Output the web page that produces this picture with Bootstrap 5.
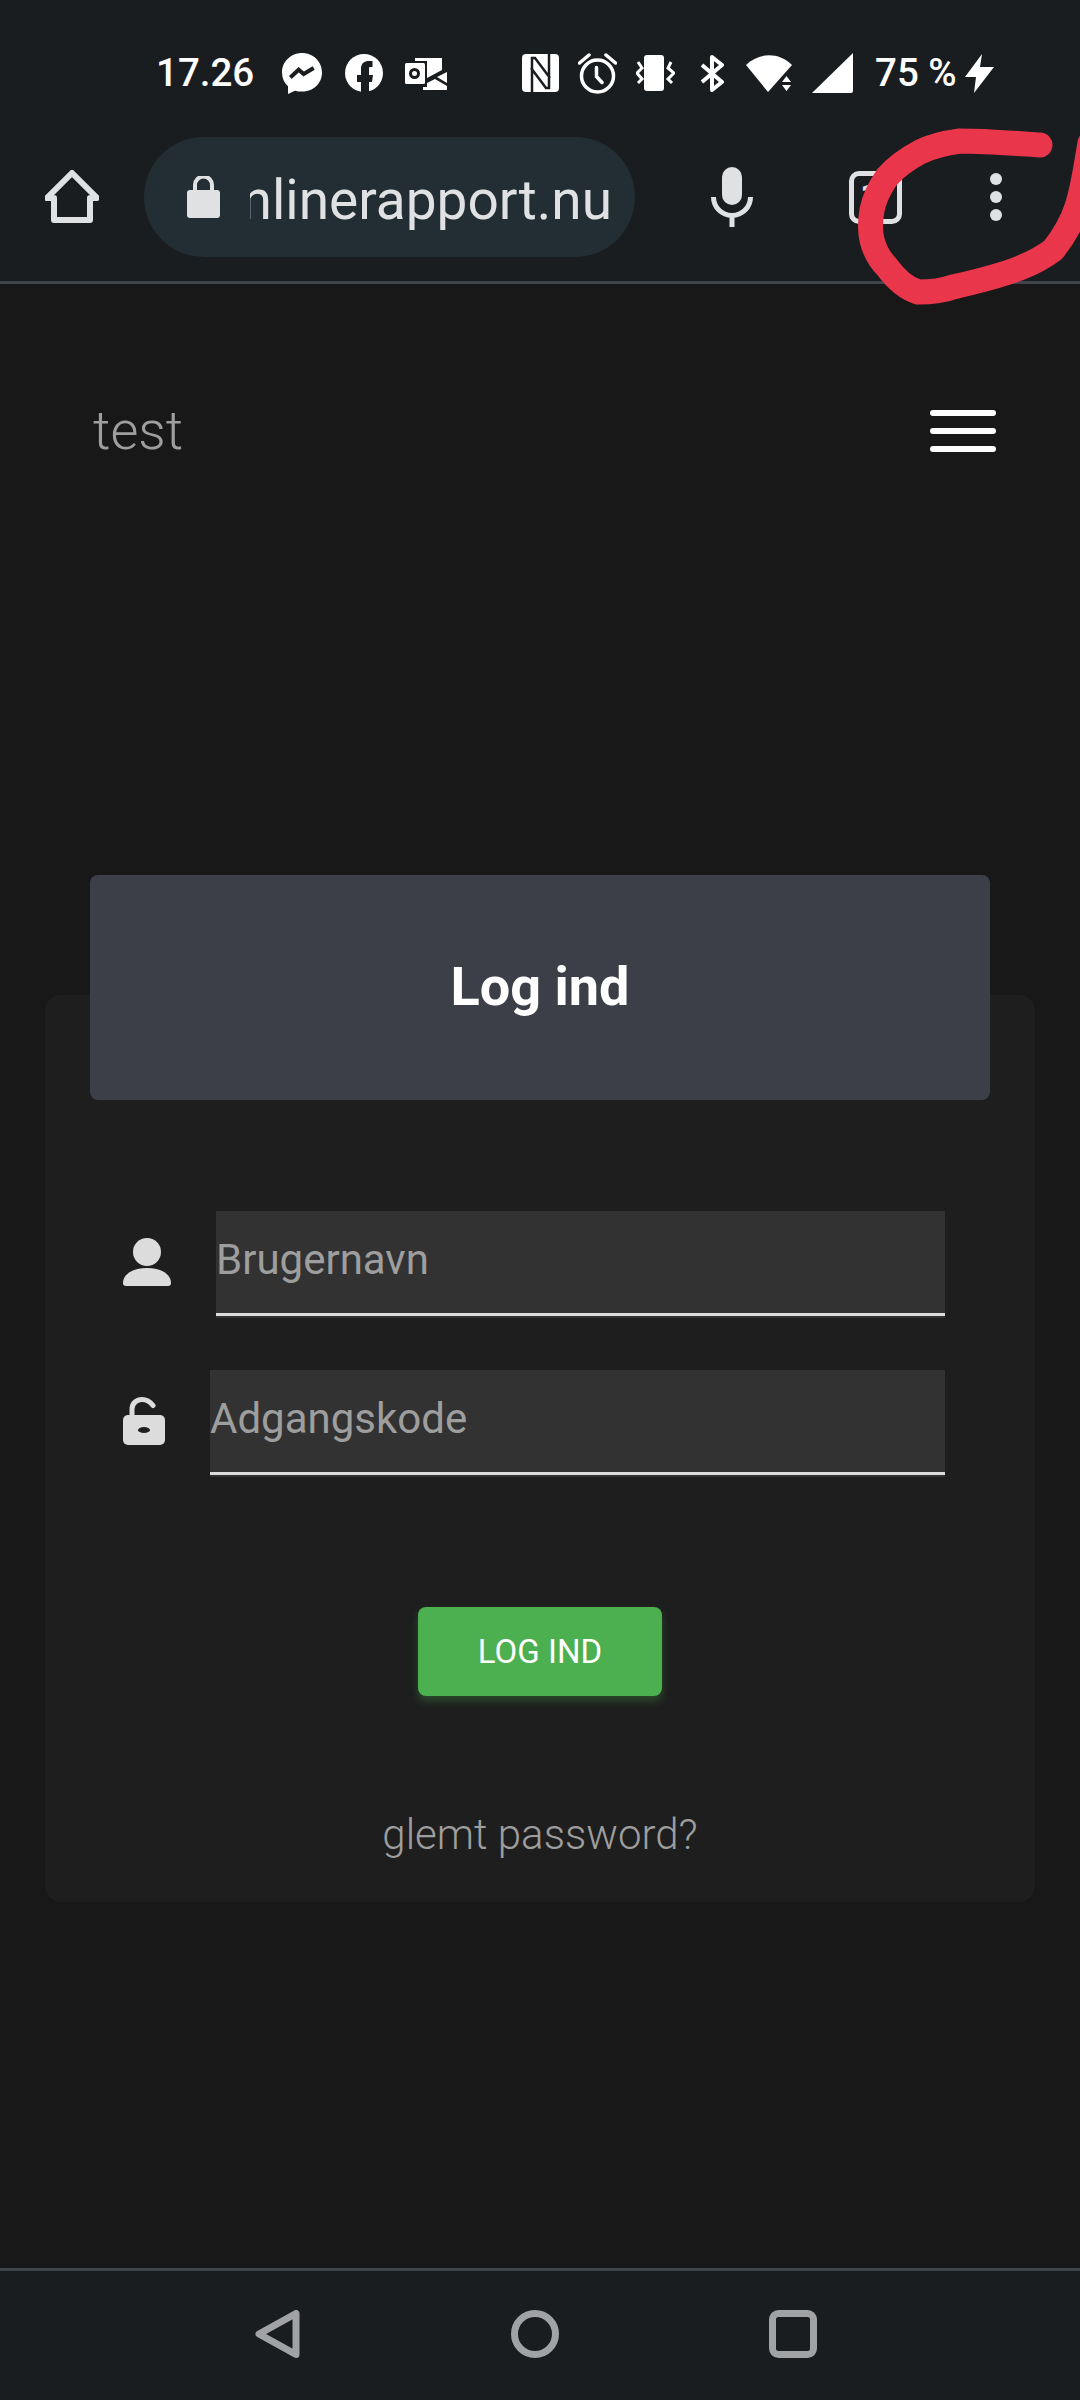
<!DOCTYPE html>
<html lang="da">
<head>
<meta charset="utf-8">
<title>Log ind</title>
<link href="https://cdn.jsdelivr.net/npm/bootstrap@5.3.0/dist/css/bootstrap.min.css" rel="stylesheet">
<style>
html,body{height:100%}
body{background:#181818;font-family:Roboto,"Liberation Sans",sans-serif;overflow:hidden}
.page-wrap{position:relative;height:2400px}
.chrome-top{background:#1a1d20;height:284px;border-bottom:3px solid #3f444a;padding-top:52px}
.status-row{height:42px;padding-left:156px;color:#fff;font-size:38.500px;font-weight:500;line-height:42px}
.status-row svg{display:block;flex:none;fill:#fff}
.status-row .ink{fill:#1a1d20}
.status-row .line-ink{fill:none;stroke:#1a1d20}
.status-row .line-white{fill:none;stroke:#fff}
.st-time{width:98px;white-space:nowrap}
.m27{margin-left:28px}.m23{margin-left:23px}.m22{margin-left:22px}.m75{margin-left:75px}.m20{margin-left:20px}.m19{margin-left:19px}.m25{margin-left:25px}.m9{margin-left:9px}
.st-batt{width:81px;white-space:nowrap;margin-left:22px}
.url-row{margin-top:43px;padding-left:45px;height:120px}
.url-pill{width:491px;height:120px;background:#222e33;border-radius:60px;margin-left:45px;padding-left:43px;padding-right:23px;color:#e0e1e3}
.url-clip{flex:1;overflow:hidden;white-space:nowrap;margin-left:30px;padding-top:6px;font-size:55px;line-height:66px;display:flex;justify-content:flex-end}
.tab-count{width:53px;height:53px;border:5px solid #e0e1e3;border-radius:10px;margin-left:96px;font-size:36px;font-weight:700;line-height:43px;text-align:left;padding-left:6px;color:#e0e1e3}
.dot-col{margin-left:88px;gap:6px}
.dot-col i{display:block;width:12px;height:12px;border-radius:50%;background:#e0e1e3}
.brand-bar{height:294px;padding:0 84px 0 93px}
.brand-name{font-size:54px;font-weight:300;color:#9e9e9e;padding:0;margin:0;line-height:60px}
.brand-name:hover,.brand-name:focus{color:#9e9e9e}
.burger-btn{width:66px;border:0;background:none;padding:0;gap:12px}
.burger-btn i{display:block;height:6px;background:#fff;border-radius:3px}
.main-area{padding:417px 45px 0}
.login-card{background:#1e1e1e;border:0;border-radius:16px;height:907px}
.login-head{background:#3c3f47;border:0;border-radius:8px!important;margin:-120px 45px 0;height:225px;padding:0 0 2px;color:#fff;font-size:54px;font-weight:700}
.login-form{margin-top:111px;padding:0 90px 0 78px;gap:54px}
.field-row{gap:45px}
.field-row svg{flex:none;fill:#dcdcdc;margin-bottom:3px}
.field-input{flex:1;height:105px;background:#323232;border:0;border-bottom:3px solid #dcdcdc;border-radius:0;box-shadow:0 2px 0 #323232;padding:0 0 6px;color:#fff;font-size:42px;font-family:inherit}
.field-input::placeholder{color:#9e9e9e;opacity:1}
.field-input:focus{background:#323232;box-shadow:0 2px 0 #323232;border-color:#dcdcdc;color:#fff}
.login-btn{width:244px;height:89px;margin-top:132px;background:#4caf50;border:0;border-radius:8px;color:#fff;font-size:33px;padding:0;box-shadow:0 5px 8px rgba(76,175,80,.3)}
.forgot-link{font-size:42px;font-weight:300;color:#9e9e9e;text-decoration:none;margin-top:114px;line-height:50px}
.chrome-bottom{background:#1a1d20;height:132px;border-top:3px solid #3f444a;padding:39px 0 0 255px;gap:210px}
.scribble{position:absolute;left:0;top:0;pointer-events:none}
</style>
</head>
<body>
<div class="page-wrap d-flex flex-column">
  <header class="chrome-top">
    <div class="status-row d-flex align-items-center">
      <span class="st-time">17.26</span>
      <svg class="m27" width="40" height="41" viewBox="0 0 40 41"><path d="M20 0C9 0 0 8.500 0 19.500c0 5.500 2.200 10.300 6 13.700V41l7-3.300c2.100.6 4.500.9 7 .9 11 0 20-8 20-19.100S31 0 20 0z"/><path class="line-ink" stroke-width="4" stroke-linejoin="miter" d="M8.300 24.500L16.700 16.700 21.700 21 31.700 15"/></svg>
      <svg class="m23" width="38" height="38" viewBox="0 0 38 38"><circle cx="19" cy="19" r="19"/><path class="ink" d="M16 38V28H12V21h4V15c0-6 3.500-8 8-8h3.500v6H25c-1 0-1 .8-1 2v6h4l-1 7h-3V38z"/></svg>
      <svg class="m22" width="42" height="33" viewBox="0 0 42 33"><rect x="0" y="6" width="20" height="21" rx="1.500"/><ellipse class="line-ink" cx="9.500" cy="16.500" rx="4" ry="4" stroke-width="3"/><path d="M10 1H37V13L22 21V4H10z"/><path d="M42 15V26L32 20z"/><path d="M22 26L30 22 42 29V33H18V30H22z"/></svg>
      <svg class="m75" width="37" height="38" viewBox="0 0 37 38"><rect width="37" height="38" rx="4"/><path class="line-ink" stroke-width="2.500" d="M10 38V4h3L28 24M27 0V34h-3L9 14"/></svg>
      <svg class="m19" width="39" height="41" viewBox="0 0 39 41"><g class="line-white" stroke-width="3.500" stroke-linecap="round"><circle cx="19.500" cy="23" r="16"/><path d="M18.500 14.500V23.500L24 29.500M1.500 10L11 2M37.500 10L28 2"/></g></svg>
      <svg class="m19" width="39" height="36" viewBox="0 0 39 36"><rect x="8" y="0" width="20" height="36" rx="3"/><path class="line-white" stroke-width="3" d="M2 7L6 13 1 18 6 24 2 28M35 7L32 13 38 18 32 24 36 28"/></svg>
      <svg class="m25" width="24" height="37" viewBox="0 0 24 37"><path class="line-white" stroke-width="4" stroke-linejoin="round" d="M2 10L22 27 12 35V2L22 10 2 27"/></svg>
      <svg class="m22" width="46" height="37" viewBox="0 0 46 37"><path d="M0 10C13-3 33-3 46 10L22 37z"/><path d="M40.500 21L45 27H36zM40.500 36L45 30H36z"/></svg>
      <svg class="m20" width="41" height="40" viewBox="0 0 41 40"><path d="M41 0V38a2 2 0 0 1-2 2H0z"/></svg>
      <span class="st-batt">75 %</span>
      <svg class="m9" width="29" height="39" viewBox="0 0 29 39"><path d="M17 0L0 23h11l-2 16 20-26H15z"/></svg>
    </div>
    <div class="url-row d-flex align-items-center">
      <svg width="54" height="54" viewBox="0 0 54 54"><path d="M27 3L52 28H45V50H9V28H2z" fill="none" stroke="#e0e1e3" stroke-width="6" stroke-linejoin="round"/></svg>
      <div class="url-pill d-flex align-items-center">
        <svg width="33" height="42" viewBox="0 0 33 42" style="flex:none"><rect y="14" width="33" height="28" rx="3" fill="#e0e1e3"/><path d="M8 16V9a8.500 8.500 0 0 1 17 0v7" fill="none" stroke="#e0e1e3" stroke-width="4"/></svg>
        <div class="url-clip"><span>onlinerapport.nu</span></div>
      </div>
      <svg style="margin-left:76px" width="42" height="60" viewBox="0 0 42 60"><rect x="11" y="0" width="20" height="38" rx="10" fill="#e0e1e3"/><path d="M2.500 30a18.500 18.500 0 0 0 37 0M21 48V60" fill="none" stroke="#e0e1e3" stroke-width="5"/></svg>
      <div class="tab-count">1</div>
      <div class="dot-col d-flex flex-column"><i></i><i></i><i></i></div>
    </div>
  </header>
  <nav class="navbar brand-bar d-flex justify-content-between align-items-center">
    <a class="navbar-brand brand-name" href="#">test</a>
    <button class="burger-btn d-flex flex-column" type="button" aria-label="Menu"><i class="w-100"></i><i class="w-100"></i><i class="w-100"></i></button>
  </nav>
  <main class="main-area flex-grow-1">
    <div class="card login-card">
      <div class="card-header login-head d-flex align-items-center justify-content-center">Log ind</div>
      <form class="login-form d-flex flex-column">
        <div class="field-row d-flex align-items-center">
          <svg width="48" height="48" viewBox="0 0 48 48"><circle cx="24" cy="14" r="14"/><path d="M0 45C0 36 10 30 24 30s24 6 24 15a3 3 0 0 1-3 3H3a3 3 0 0 1-3-3z"/></svg>
          <input class="form-control field-input" type="text" placeholder="Brugernavn">
        </div>
        <div class="field-row d-flex align-items-center">
          <svg width="42" height="48" viewBox="0 0 42 48"><path d="M9 20V12C9 6 14 2.500 19 2.500c5 0 8 2 11 6" fill="none" stroke="#dcdcdc" stroke-width="5" stroke-linecap="round"/><path d="M5 18h32a5 5 0 0 1 5 5v20a5 5 0 0 1-5 5H5a5 5 0 0 1-5-5V23a5 5 0 0 1 5-5z"/><ellipse cx="21" cy="33" rx="6" ry="3" fill="#1e1e1e"/></svg>
          <input class="form-control field-input" type="password" placeholder="Adgangskode">
        </div>
      </form>
      <div class="d-flex flex-column align-items-center">
        <button class="btn login-btn" type="button">LOG IND</button>
        <a class="forgot-link" href="#">glemt password?</a>
      </div>
    </div>
  </main>
  <footer class="chrome-bottom d-flex mt-auto">
    <svg width="46" height="48" viewBox="0 0 46 48"><path d="M4 24L41 3.500V44.500z" fill="none" stroke="#a0a2a4" stroke-width="7" stroke-linejoin="round"/></svg>
    <svg width="48" height="48" viewBox="0 0 48 48"><circle cx="24" cy="24" r="20.500" fill="none" stroke="#a0a2a4" stroke-width="7"/></svg>
    <svg width="48" height="48" viewBox="0 0 48 48"><rect x="3.500" y="3.500" width="41" height="41" rx="6" fill="none" stroke="#a0a2a4" stroke-width="7"/></svg>
  </footer>
  <svg class="scribble" width="1080" height="320" viewBox="0 0 1080 320"><path d="M1040 145C1010 143 985 141 960 141C945 143 930 147 920 152C905 160 895 168 887 177C878 190 874 200 872 210C870 222 870 232 872 240C875 252 880 260 887 267C895 278 905 288 918 292C930 292 945 290 953 287C975 282 1000 276 1020 268C1035 262 1045 256 1053 250C1065 235 1072 222 1077 207C1084 185 1086 165 1090 143" fill="none" stroke="#ea364b" stroke-width="25" stroke-linecap="round" stroke-linejoin="round"/></svg>
</div>
<script src="https://cdn.jsdelivr.net/npm/bootstrap@5.3.0/dist/js/bootstrap.bundle.min.js"></script>
</body>
</html>
